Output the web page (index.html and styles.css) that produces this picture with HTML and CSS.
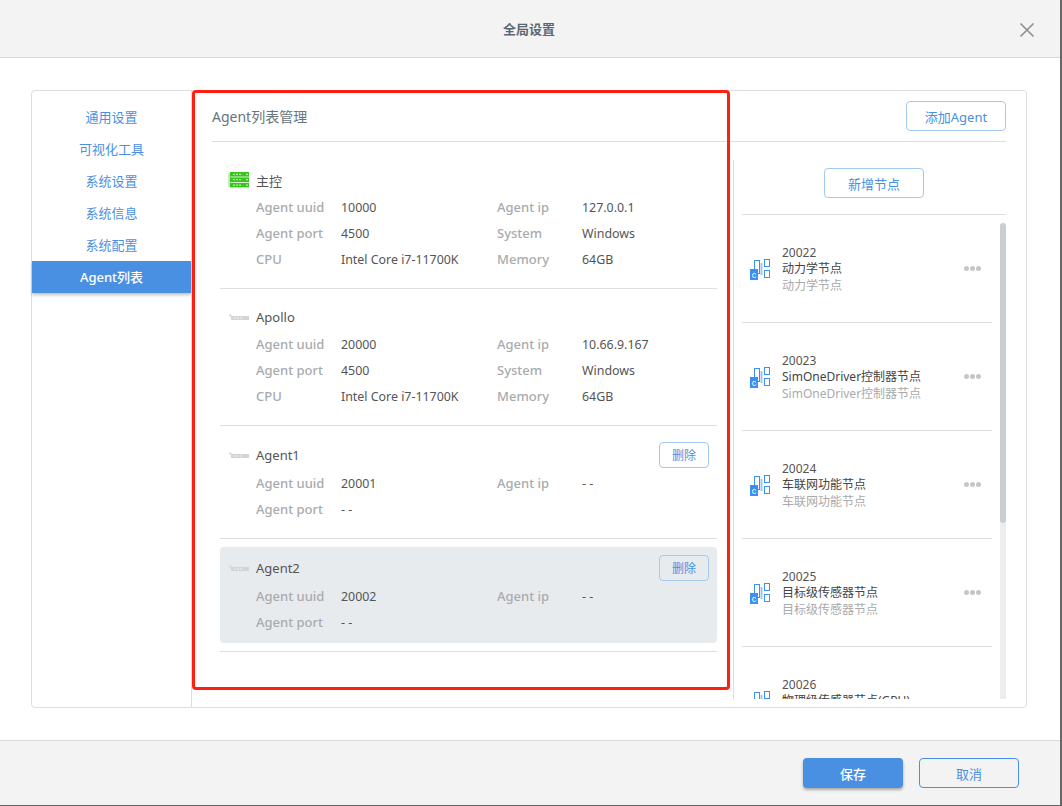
FILE: index.html
```html
<!DOCTYPE html>
<html lang="zh-CN">

<head>
    <meta charset="UTF-8">
    <title>全局设置</title>
    <link rel="stylesheet" href="styles.css">
</head>

<body>
    <div class="dialog">
        <div class="dialog-header">
            <span class="dialog-title">全局设置</span>
            <svg class="close" width="16" height="16" viewBox="0 0 16 16">
                <path d="M1.5 1.5L14.5 14.5M14.5 1.5L1.5 14.5" stroke="#8a9095" stroke-width="1.6" fill="none" />
            </svg>
        </div>

        <div class="dialog-body">
            <div class="panel">
                <!-- Side menu -->
                <div class="side">
                    <div class="side-item">通用设置</div>
                    <div class="side-item">可视化工具</div>
                    <div class="side-item">系统设置</div>
                    <div class="side-item">系统信息</div>
                    <div class="side-item">系统配置</div>
                    <div class="side-item active">Agent列表</div>
                </div>

                <div class="main">
                    <div class="main-header">
                        <span class="main-title">Agent列表管理</span>
                        <button class="btn">添加Agent</button>
                    </div>

                    <div class="main-content">
                        <!-- Agent list -->
                        <div class="agents">
                            <div class="agent">
                                <div class="agent-head">
                                    <svg class="agent-icon" width="22" height="18" viewBox="0 0 22 18">
                                        <rect x="0" y="2" width="3" height="14" fill="#c5e8bd" />
                                        <rect x="2" y="1" width="19" height="4.6" fill="#36c51a" />
                                        <rect x="2" y="6.4" width="19" height="4.6" fill="#36c51a" />
                                        <rect x="2" y="11.8" width="19" height="4.6" fill="#36c51a" />
                                        <path d="M5 3.3h8M18 3.3h2M5 8.7h8M18 8.7h2M5 14.1h8M18 14.1h2" stroke="#e6f8e0" stroke-width="1" stroke-dasharray="2 1" fill="none" />
                                    </svg>
                                    <span class="agent-name">主控</span>
                                </div>
                                <div class="agent-info">
                                    <span class="label">Agent uuid</span><span class="value">10000</span>
                                    <span class="label">Agent ip</span><span class="value">127.0.0.1</span>
                                    <span class="label">Agent port</span><span class="value">4500</span>
                                    <span class="label">System</span><span class="value">Windows</span>
                                    <span class="label">CPU</span><span class="value">Intel Core i7-11700K</span>
                                    <span class="label">Memory</span><span class="value">64GB</span>
                                </div>
                            </div>

                            <div class="agent">
                                <div class="agent-head">
                                    <svg class="agent-icon" width="22" height="18" viewBox="0 0 22 18">
                                        <path d="M1 6.5h2l1 2h-2.5z" fill="#d2d4d6" />
                                        <rect x="3" y="8" width="18" height="4" fill="#d2d4d6" />
                                        <path d="M6 10h8" stroke="#f4f4f4" stroke-width="1" stroke-dasharray="2 1" fill="none" />
                                    </svg>
                                    <span class="agent-name">Apollo</span>
                                </div>
                                <div class="agent-info">
                                    <span class="label">Agent uuid</span><span class="value">20000</span>
                                    <span class="label">Agent ip</span><span class="value">10.66.9.167</span>
                                    <span class="label">Agent port</span><span class="value">4500</span>
                                    <span class="label">System</span><span class="value">Windows</span>
                                    <span class="label">CPU</span><span class="value">Intel Core i7-11700K</span>
                                    <span class="label">Memory</span><span class="value">64GB</span>
                                </div>
                            </div>

                            <div class="agent">
                                <div class="agent-head">
                                    <svg class="agent-icon" width="22" height="18" viewBox="0 0 22 18">
                                        <path d="M1 6.5h2l1 2h-2.5z" fill="#d2d4d6" />
                                        <rect x="3" y="8" width="18" height="4" fill="#d2d4d6" />
                                        <path d="M6 10h8" stroke="#f4f4f4" stroke-width="1" stroke-dasharray="2 1" fill="none" />
                                    </svg>
                                    <span class="agent-name">Agent1</span>
                                    <button class="btn btn-small">删除</button>
                                </div>
                                <div class="agent-info">
                                    <span class="label">Agent uuid</span><span class="value">20001</span>
                                    <span class="label">Agent ip</span><span class="value">- -</span>
                                    <span class="label">Agent port</span><span class="value">- -</span>
                                </div>
                            </div>

                            <div class="agent selected">
                                <div class="agent-head">
                                    <svg class="agent-icon" width="22" height="18" viewBox="0 0 22 18">
                                        <path d="M1 6.5h2l1 2h-2.5z" fill="#d2d4d6" />
                                        <rect x="3" y="8" width="18" height="4" fill="#d2d4d6" />
                                        <path d="M6 10h8" stroke="#f4f4f4" stroke-width="1" stroke-dasharray="2 1" fill="none" />
                                    </svg>
                                    <span class="agent-name">Agent2</span>
                                    <button class="btn btn-small">删除</button>
                                </div>
                                <div class="agent-info">
                                    <span class="label">Agent uuid</span><span class="value">20002</span>
                                    <span class="label">Agent ip</span><span class="value">- -</span>
                                    <span class="label">Agent port</span><span class="value">- -</span>
                                </div>
                            </div>
                        </div>

                        <!-- Node list -->
                        <div class="nodes">
                            <div class="nodes-top">
                                <button class="btn">新增节点</button>
                            </div>
                            <div class="nodes-scroll">
                                <div class="node-list">
                                    <div class="node">
                                        <svg class="node-icon" width="21" height="22" viewBox="0 0 21 22">
                                            <use href="#node-glyph" />
                                        </svg>
                                        <div class="node-text">
                                            <div>20022</div>
                                            <div class="node-name">动力学节点</div>
                                            <div class="node-desc">动力学节点</div>
                                        </div>
                                        <div class="dots"><i></i><i></i><i></i></div>
                                    </div>
                                    <div class="node">
                                        <svg class="node-icon" width="21" height="22" viewBox="0 0 21 22">
                                            <use href="#node-glyph" />
                                        </svg>
                                        <div class="node-text">
                                            <div>20023</div>
                                            <div class="node-name">SimOneDriver控制器节点</div>
                                            <div class="node-desc">SimOneDriver控制器节点</div>
                                        </div>
                                        <div class="dots"><i></i><i></i><i></i></div>
                                    </div>
                                    <div class="node">
                                        <svg class="node-icon" width="21" height="22" viewBox="0 0 21 22">
                                            <use href="#node-glyph" />
                                        </svg>
                                        <div class="node-text">
                                            <div>20024</div>
                                            <div class="node-name">车联网功能节点</div>
                                            <div class="node-desc">车联网功能节点</div>
                                        </div>
                                        <div class="dots"><i></i><i></i><i></i></div>
                                    </div>
                                    <div class="node">
                                        <svg class="node-icon" width="21" height="22" viewBox="0 0 21 22">
                                            <use href="#node-glyph" />
                                        </svg>
                                        <div class="node-text">
                                            <div>20025</div>
                                            <div class="node-name">目标级传感器节点</div>
                                            <div class="node-desc">目标级传感器节点</div>
                                        </div>
                                        <div class="dots"><i></i><i></i><i></i></div>
                                    </div>
                                    <div class="node">
                                        <svg class="node-icon" width="21" height="22" viewBox="0 0 21 22">
                                            <use href="#node-glyph" />
                                        </svg>
                                        <div class="node-text">
                                            <div>20026</div>
                                            <div class="node-name">物理级传感器节点(GPU)</div>
                                            <div class="node-desc">物理级传感器节点(GPU)</div>
                                        </div>
                                    </div>
                                </div>
                                <div class="scrollbar">
                                    <div class="scroll-thumb"></div>
                                </div>
                            </div>
                        </div>
                    </div>
                </div>
            </div>
        </div>

        <div class="dialog-footer">
            <button class="btn-save">保存</button>
            <button class="btn-cancel">取消</button>
        </div>

        <!-- Red annotation frame -->
        <div class="mark"></div>
    </div>

    <svg width="0" height="0" class="defs">
        <defs>
            <g id="node-glyph">
                <rect x="4.5" y="2.5" width="5" height="13" fill="none" stroke="#3d8ff0" />
                <path d="M11.5 5v12" stroke="#9cc6f6" stroke-width="2" />
                <rect x="14.5" y="1.5" width="5" height="7" fill="none" stroke="#3d8ff0" />
                <rect x="14.5" y="12.5" width="5" height="7" fill="none" stroke="#3d8ff0" />
                <rect x="0" y="11" width="8" height="11" fill="#3d8ff0" />
                <text x="4" y="20" font-size="9" fill="#fff" text-anchor="middle" font-family="Liberation Sans, sans-serif">c</text>
            </g>
        </defs>
    </svg>
</body>

</html>
```

FILE: styles.css
```css
* {
    box-sizing: border-box;
}

body {
    margin: 0;
    height: 806px;
    overflow: hidden;
    background-color: #666;
    font-family: "Noto Sans", "Noto Sans CJK SC", sans-serif;
    font-size: 13px;
    color: #555;
}

button {
    font-family: inherit;
    cursor: pointer;
}

.defs {
    position: absolute;
}

.dialog {
    position: relative;
    width: 1060px;
    height: 805px;
    display: flex;
    flex-direction: column;
    background-color: #fff;
}

.dialog-header {
    height: 58px;
    display: flex;
    align-items: center;
    justify-content: center;
    padding-right: 2px;
    background-color: #f3f3f3;
    border-bottom: 1px solid #d9d9d9;
}

.dialog-title {
    font-weight: 700;
    color: #5b6873;
}

.close {
    position: absolute;
    top: 22px;
    left: 1019px;
}

.dialog-body {
    flex: 1;
    padding: 32px 33px 32px 31px;
}

.panel {
    height: 618px;
    display: flex;
    border: 1px solid #dedede;
    border-radius: 4px;
}

.side {
    width: 160px;
    padding-top: 10px;
    border-right: 1px solid #dedede;
}

.side-item {
    height: 32px;
    line-height: 32px;
    text-align: center;
    color: #4a90e2;
}

.side-item.active {
    background-color: #4a90e2;
    color: #fff;
    font-weight: 500;
    box-shadow: 0 2px 3px rgba(0, 0, 0, 0.25);
}

.main {
    flex: 1;
    padding: 0 20px;
    display: flex;
    flex-direction: column;
}

.main-header {
    height: 51px;
    display: flex;
    align-items: center;
    justify-content: space-between;
    border-bottom: 1px solid #dedede;
}

.main-title {
    font-size: 14px;
    color: #667580;
}

.btn {
    width: 100px;
    height: 30px;
    padding: 0;
    font-size: 13px;
    color: #4a90e2;
    background-color: #fff;
    border: 1px solid #a5c8f0;
    border-radius: 4px;
}

.btn-small {
    width: 50px;
    height: 26px;
    font-size: 12px;
    background-color: transparent;
    margin-left: auto;
}

.main-content {
    flex: 1;
    display: flex;
}

.agents {
    width: 521px;
    padding: 18px 16px 0 8px;
}

.agent {
    padding: 8px;
    margin-bottom: 17px;
    position: relative;
}

.agent::after {
    content: "";
    position: absolute;
    left: 0;
    right: 0;
    bottom: -9px;
    border-bottom: 1px solid #dedede;
}

.agent.selected {
    background-color: #e8ebee;
    border-radius: 4px;
}

.agent-head {
    min-height: 24px;
    display: flex;
    align-items: center;
    margin-bottom: 2px;
}

.agent-icon {
    flex: none;
    margin-right: 6px;
}

.agent-name {
    color: #555;
}

.agent-info {
    display: grid;
    grid-template-columns: 85px 156px 85px 1fr;
    grid-auto-rows: 26px;
    align-items: center;
    padding-left: 28px;
}

.label {
    color: #a8abad;
    font-weight: 500;
}

.value {
    font-size: 12.4px;
    color: #555;
}

.nodes {
    flex: 1;
    margin-top: 18px;
    height: 539px;
    padding-left: 8px;
    border-left: 1px solid #dedede;
    display: flex;
    flex-direction: column;
}

.nodes-top {
    height: 55px;
    padding-top: 8px;
    text-align: center;
    border-bottom: 1px solid #dedede;
}

.nodes-scroll {
    flex: 1;
    min-height: 0;
    display: flex;
    justify-content: space-between;
}

.node-list {
    width: 250px;
    overflow: hidden;
}

.node {
    height: 108px;
    flex: none;
    display: flex;
    align-items: center;
    padding-left: 8px;
    border-bottom: 1px solid #dedede;
}

.node-icon {
    flex: none;
    margin-right: 11px;
}

.node-text {
    flex: 1;
    padding-top: 2px;
    font-size: 12px;
    line-height: 16.5px;
    white-space: nowrap;
}

.node-name {
    color: #444;
}

.node-desc {
    color: #aaa;
}

.dots {
    display: flex;
    gap: 1px;
    margin-right: 11px;
}

.dots i {
    width: 5px;
    height: 5px;
    border-radius: 50%;
    background-color: #c4c6c8;
}

.scrollbar {
    width: 6px;
    margin-top: 8px;
    background-color: #ededed;
    border-radius: 3px 3px 0 0;
}

.scroll-thumb {
    height: 300px;
    background-color: #c9ced2;
    border-radius: 3px;
}

.dialog-footer {
    height: 65px;
    display: flex;
    justify-content: flex-end;
    gap: 16px;
    padding: 17px 41px 0 0;
    background-color: #f3f3f3;
    border-top: 1px solid #d9d9d9;
}

.btn-save,
.btn-cancel {
    width: 100px;
    height: 30px;
    padding: 0;
    font-size: 13px;
    border-radius: 4px;
}

.btn-save {
    color: #fff;
    font-weight: 500;
    background-color: #4a90e2;
    border: none;
    box-shadow: 0 2px 3px rgba(0, 0, 0, 0.3);
}

.btn-cancel {
    color: #4a90e2;
    background-color: transparent;
    border: 1px solid #4a90e2;
}

.mark {
    position: absolute;
    left: 192px;
    top: 90px;
    width: 538px;
    height: 600px;
    border: 3px solid #ff1f10;
    border-radius: 4px;
    pointer-events: none;
}
```
